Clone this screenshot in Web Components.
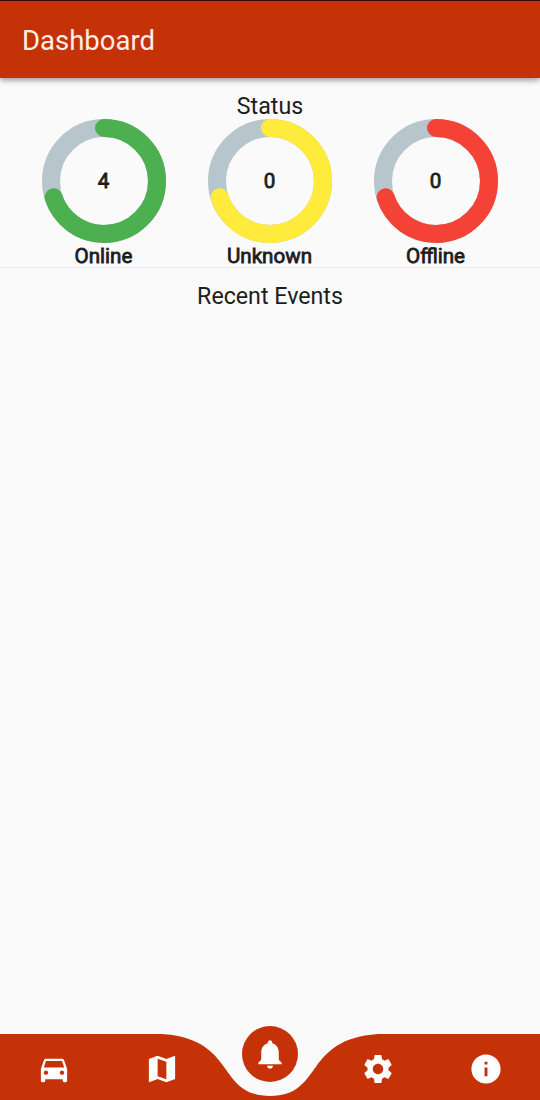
<!DOCTYPE html>
<html lang="en">
<head>
<meta charset="utf-8">
<title>Dashboard</title>
<style>
html,body{margin:0;height:100%}
body{font-family:Roboto,"Liberation Sans",sans-serif;color:#1d1d1d;background:#fafafa;overflow:hidden}
</style>
</head>
<body>
<dash-app></dash-app>
<script>
const define = (name, html, setup) => customElements.define(name, class extends HTMLElement {
  connectedCallback() {
    if (this.shadowRoot) return;
    const t = document.createElement('template');
    t.innerHTML = html;
    this.attachShadow({mode: 'open'}).append(t.content.cloneNode(true));
    if (setup) setup(this, this.shadowRoot);
  }
});

define('app-header', `<style>
:host{display:flex;align-items:center;box-sizing:border-box;height:78px;padding:2px 22px 0;background:#c63208;color:#fcefe6;
border-top:1px solid #3c0505;box-shadow:0 2px 6px rgba(0,0,0,.42);font-size:27.5px;position:relative;z-index:1}
</style><slot></slot>`);

define('status-ring', `<style>
:host{display:flex;flex-direction:column;align-items:center;width:124px}
.ring{display:grid;place-items:center;width:124px;height:124px}
.ring>*{grid-area:1/1}
svg{display:block}
.n,.l{font-weight:400;-webkit-text-stroke:.8px currentColor;margin-left:-1px;font-size:20.6px}
.l{line-height:24px;height:24px;padding-top:1px;box-sizing:border-box}
</style>
<div class="ring"><svg width="124" height="124" fill="none" stroke-width="18">
<circle cx="62" cy="62" r="53" stroke="#b7c6cc"/>
<circle class="arc" cx="62" cy="62" r="53" stroke-linecap="round" pathLength="100" stroke-dasharray="70 100" transform="rotate(-90 62 62)"/>
</svg><span class="n"><slot></slot></span></div><span class="l"></span>`, (el, root) => {
  root.querySelector('.arc').setAttribute('stroke', el.getAttribute('color'));
  root.querySelector('.l').textContent = el.getAttribute('label');
});

define('section-title', `<style>
:host{display:block;text-align:center;font-size:23.2px;line-height:27px}
</style><slot></slot>`);

const icons = {
  car: 'M18.92 6.01C18.72 5.42 18.16 5 17.5 5h-11c-.66 0-1.21.42-1.42 1.01L3 12v8c0 .55.45 1 1 1h1c.55 0 1-.45 1-1v-1h12v1c0 .55.45 1 1 1h1c.55 0 1-.45 1-1v-8l-2.08-5.99zM6.5 16c-.83 0-1.5-.67-1.5-1.5S5.67 13 6.5 13s1.5.67 1.5 1.5S7.33 16 6.5 16zm11 0c-.83 0-1.5-.67-1.5-1.5s.67-1.5 1.5-1.5 1.5.67 1.5 1.5-.67 1.5-1.5 1.5zM5 11l1.5-4.5h11L19 11H5z',
  map: 'M20.5 3l-.16.03L15 5.1 9 3 3.36 4.9c-.21.07-.36.25-.36.48V20.5c0 .28.22.5.5.5l.16-.03L9 18.9l6 2.1 5.64-1.9c.21-.07.36-.25.36-.48V3.500c0-.28-.22-.5-.5-.5zM15 19l-6-2.110V5l6 2.110V19z',
  bell: 'M12 22c1.1 0 2-.9 2-2h-4c0 1.100.89 2 2 2zm6-6v-5c0-3.070-1.640-5.640-4.500-6.320V4c0-.83-.67-1.500-1.500-1.500s-1.500.67-1.500 1.500v.68C7.630 5.360 6 7.920 6 11v5l-2 2v1h16v-1l-2-2z',
  gear: 'M19.140 12.940c.04-.3.060-.61.060-.94 0-.32-.02-.64-.07-.94l2.030-1.580c.18-.14.23-.41.120-.61l-1.920-3.320c-.12-.22-.37-.29-.59-.22l-2.390.96c-.5-.38-1.030-.7-1.620-.94l-.36-2.540c-.04-.24-.24-.41-.48-.41h-3.840c-.24 0-.43.17-.47.41l-.36 2.540c-.59.24-1.130.57-1.620.94l-2.390-.96c-.22-.08-.47 0-.59.22L2.740 8.870c-.12.21-.08.47.120.61l2.030 1.580c-.05.3-.09.63-.09.94s.02.64.07.94l-2.030 1.580c-.18.14-.23.41-.12.61l1.920 3.320c.12.22.37.29.59.22l2.390-.96c.5.38 1.030.7 1.620.94l.36 2.540c.05.24.24.41.48.41h3.840c.24 0 .44-.17.47-.41l.36-2.540c.59-.24 1.130-.56 1.620-.94l2.390.96c.22.08.47 0 .59-.22l1.920-3.320c.12-.22.07-.47-.12-.61l-2.010-1.580zM12 15.600c-1.980 0-3.600-1.620-3.600-3.600s1.620-3.600 3.600-3.600 3.600 1.620 3.600 3.600-1.620 3.600-3.600 3.600z',
  info: 'M12 2C6.480 2 2 6.480 2 12s4.480 10 10 10 10-4.480 10-10S17.520 2 12 2zm1 15h-2v-6h2v6zm0-8h-2V7h2v2z'
};
define('nav-item', `<style>
:host{display:grid;place-items:center;height:70px}
span{display:grid;place-items:center}
svg{display:block;fill:#fff}
:host([active]) span{width:56px;height:56px;border-radius:50%;background:#c63208;transform:translateY(-15px)}
</style><span><svg width="36" height="36" viewBox="-.34 -.34 24.68 24.68"><path/></svg></span>`, (el, root) => {
  root.querySelector('path').setAttribute('d', icons[el.getAttribute('icon')]);
});

define('nav-bar', `<style>
:host{display:grid;height:66px}
:host>*{grid-area:1/1}
svg{display:block}
nav{display:grid;grid-template-columns:repeat(5,1fr);position:relative}
</style><svg width="540" height="66" viewBox="0 0 540 66"><path fill="#c63208" d="M0 0H162C237.600 5.150 216 61.900 270 61.900S302.400 5.150 378 0H540V66H0Z"/></svg>
<nav><slot></slot></nav>`);

define('dash-app', `<style>
:host{display:flex;flex-direction:column;height:1100px;width:540px}
main{flex:1;padding-top:15px}
.rings{display:flex;justify-content:space-between;padding:0 42px;margin-top:-1px}
hr{border:0;border-top:1px solid #ebebeb;margin:0 0 15px}
</style>
<app-header>Dashboard</app-header>
<main><section-title>Status</section-title>
<div class="rings">
<status-ring color="#4caf50" label="Online">4</status-ring>
<status-ring color="#ffeb3b" label="Unknown">0</status-ring>
<status-ring color="#f44336" label="Offline">0</status-ring></div>
<hr><section-title>Recent Events</section-title></main>
<nav-bar><nav-item icon="car"></nav-item><nav-item icon="map"></nav-item><nav-item icon="bell" active></nav-item><nav-item icon="gear"></nav-item><nav-item icon="info"></nav-item></nav-bar>`);
</script>
</body>
</html>
